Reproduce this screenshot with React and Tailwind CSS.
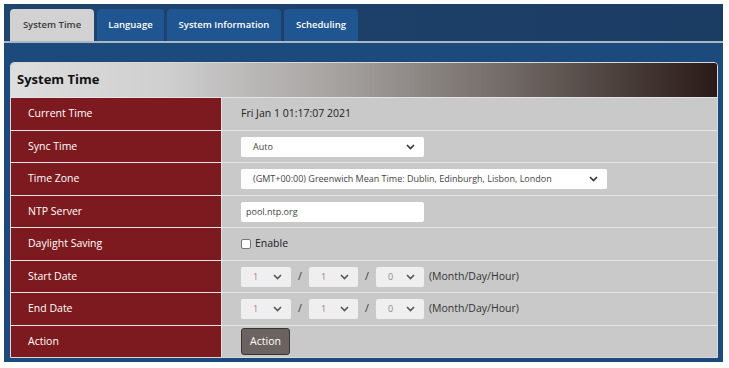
import React from "react";

const Chevron = ({ className = "" }) => (
  <svg width="9" height="6" viewBox="0 0 9 6" className={className}>
    <path d="M1 1 L4.5 4.5 L8 1" fill="none" stroke="currentColor" strokeWidth="1.6" />
  </svg>
);

const Select = ({ w, text, disabled }) => (
  <div
    className={`flex items-center justify-between h-[20px] rounded-[2px] pl-[12px] pr-[9px] text-[9px] ${
      disabled ? "bg-[#efefef] text-[#888]" : "bg-white text-[#444]"
    } ${w}`}
  >
    <span>{text}</span>
    <Chevron className={disabled ? "text-[#555]" : "text-[#333]"} />
  </div>
);

const DateRow = () => (
  <div className="flex items-center text-[10.5px] text-[#333]">
    <Select w="w-[50px]" text="1" disabled />
    <span className="w-[18px] text-center">/</span>
    <Select w="w-[49px]" text="1" disabled />
    <span className="w-[18px] text-center">/</span>
    <Select w="w-[48px]" text="0" disabled />
    <span className="ml-[5px]">(Month/Day/Hour)</span>
  </div>
);

const rows = [
  { label: "Current Time", h: "h-[33px]", v: <span className="text-[10.5px] text-[#222]">Fri Jan 1 01:17:07 2021</span> },
  { label: "Sync Time", h: "h-[32px]", v: <Select w="w-[183px]" text="Auto" /> },
  {
    label: "Time Zone",
    h: "h-[33px]",
    v: <Select w="w-[366px]" text="(GMT+00:00) Greenwich Mean Time: Dublin, Edinburgh, Lisbon, London" />,
  },
  {
    label: "NTP Server",
    h: "h-[32px]",
    v: (
      <div className="flex items-center w-[183px] h-[20px] bg-white rounded-[2px] pl-[5px] text-[9px] text-[#444]">
        pool.ntp.org
      </div>
    ),
  },
  {
    label: "Daylight Saving",
    h: "h-[33px]",
    v: (
      <div className="flex items-center text-[10.5px] text-[#222]">
        <span className="inline-block w-[10px] h-[10px] bg-white border border-[#777] rounded-[2px] mr-[4px]" />
        Enable
      </div>
    ),
  },
  { label: "Start Date", h: "h-[32px]", v: <DateRow /> },
  { label: "End Date", h: "h-[33px]", v: <DateRow /> },
  {
    label: "Action",
    h: "h-[32px]",
    v: (
      <div className="flex items-center justify-center w-[49px] h-[27px] bg-[#6b6360] border border-[#3a3432] rounded-[3px] text-white text-[10.5px]">
        Action
      </div>
    ),
  },
];

export default function App() {
  return (
    <div
      className="w-[729px] h-[368px] bg-white pt-[4px] pl-[4px]"
      style={{ fontFamily: '"Open Sans", "Noto Sans", sans-serif' }}
    >
      <div className="w-[719px] h-[358px] bg-[#1d4a7d] flex flex-col">
        <div className="h-[37px] bg-gradient-to-r from-[#1e4470] to-[#1b3c63] flex items-end pl-[6px] gap-[3px]">
          <div className="w-[84px] h-[32px] rounded-t-[4px] bg-[#d2d2d2] flex items-center justify-center text-[9.5px] font-semibold text-[#3a3a3a]">
            System Time
          </div>
          <div className="w-[67px] h-[32px] rounded-t-[4px] bg-[#1f5590] flex items-center justify-center text-[9.5px] font-semibold text-white">
            Language
          </div>
          <div className="w-[114px] h-[32px] rounded-t-[4px] bg-[#1f5590] flex items-center justify-center text-[9.5px] font-semibold text-white">
            System Information
          </div>
          <div className="w-[74px] h-[32px] rounded-t-[4px] bg-[#1f5590] flex items-center justify-center text-[9.5px] font-semibold text-white">
            Scheduling
          </div>
        </div>
        <div className="h-[2px] bg-[#aab6c4]" />
        <div className="flex-1 pt-[19px] pl-[6px] pr-[5px]">
          <div className="w-[708px] border border-[#d8d8d8] rounded-t-[4px] overflow-hidden">
            <div
              className="h-[34px] flex items-center pl-[6px] text-[13px] font-bold text-[#111]"
              style={{
                background:
                  "linear-gradient(to right, #dedede 0%, #cfcfcf 22%, #a29e9c 48%, #6e6662 72%, #2a1a17 100%)",
              }}
            >
              System Time
            </div>
            {rows.map((r) => (
              <div key={r.label} className={`flex ${r.h} border-t border-[#e4e4e4]`}>
                <div className="w-[211px] bg-[#7d1a1f] border-r border-[#e4e4e4] flex items-center pl-[17px] text-[10.5px] text-white">
                  {r.label}
                </div>
                <div className="flex-1 bg-[#c9c9c9] flex items-center pl-[19px]">{r.v}</div>
              </div>
            ))}
          </div>
        </div>
      </div>
    </div>
  );
}
